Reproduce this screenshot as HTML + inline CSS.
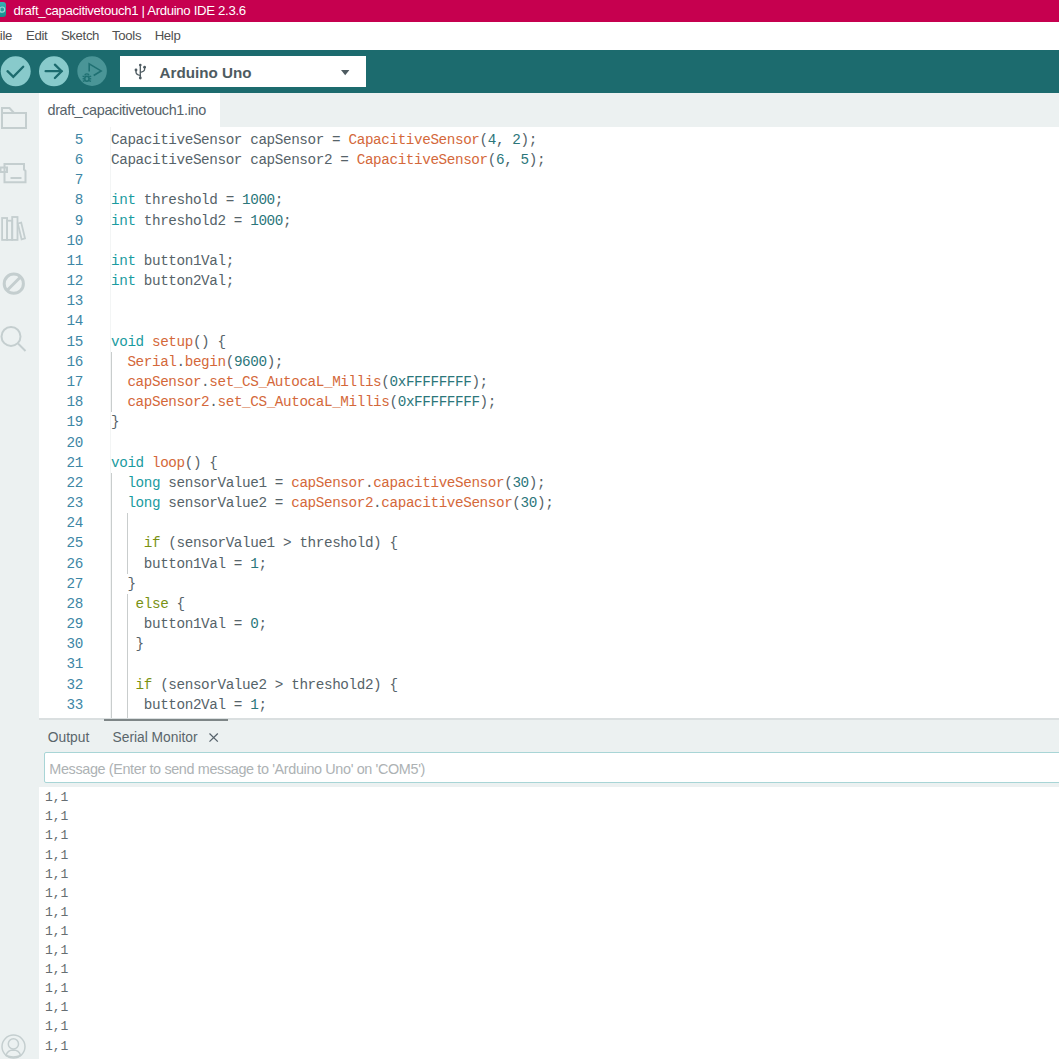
<!DOCTYPE html>
<html><head><meta charset="utf-8">
<style>
*{box-sizing:border-box;margin:0;padding:0}
html,body{width:1059px;height:1059px;overflow:hidden;background:#fff;font-family:"Liberation Sans",sans-serif}
.abs{position:absolute}
#title{left:0;top:0;width:1059px;height:22px;background:#c6004f}
#title .txt{left:13.5px;top:2.5px;color:#fff;font-size:13.2px;letter-spacing:-0.33px;line-height:16px;white-space:pre}
#appicon{left:-9px;top:2.3px;width:15px;height:15.2px;border-radius:3px;background:linear-gradient(#3ab3b5,#16898b)}
#menu{left:0;top:22px;width:1059px;height:28px;background:#fff}
#menu span{position:absolute;top:6px;font-size:13.2px;letter-spacing:-0.35px;line-height:16px;color:#505050;white-space:pre}
#toolbar{left:0;top:50px;width:1059px;height:42.5px;background:#1c6b6e}
.circ{position:absolute;width:30px;height:30px;border-radius:50%;top:56.2px}
#board{left:119.5px;top:56px;width:246.5px;height:31px;background:#fff}
#board .name{left:40px;top:6.8px;font-size:15.2px;font-weight:700;color:#4e5b61;line-height:20px;white-space:pre}
#sidebar{left:0;top:92.5px;width:39px;height:967px;background:#ecf1f1}
#tabbar{left:39px;top:92.5px;width:1020px;height:34.5px;background:#ecf1f1}
#tab{left:39px;top:92.5px;width:181px;height:34.5px;background:#fff}
#tab .t{left:8.5px;top:9.3px;font-size:14.4px;letter-spacing:-0.34px;line-height:16px;color:#56636a;white-space:pre}
#editor{left:39px;top:127px;width:1020px;height:591px;background:#fff;overflow:hidden}
.ln,.cl{position:absolute;font-family:"Liberation Mono",monospace;font-size:14.3px;letter-spacing:-0.39px;line-height:20.18px;height:20.18px;white-space:pre}
.ln{left:0;width:44px;text-align:right;color:#3d86a5}
.cl{left:72px;color:#566369}
.k{color:#1a9ba0}.f{color:#d4683a}.n{color:#2b767a}.c{color:#7a9214}
.guide{position:absolute;width:1px;background:#c9cdcd}
#faint{left:70.5px;top:0;width:1px;height:591px;background:#f3f5f5}
#sep{left:39px;top:718px;width:1020px;height:2px;background:#dadfe0}
#panel{left:39px;top:720px;width:1020px;height:339px;background:#ecf1f1}
#ptab{left:103.9px;top:719px;width:124px;height:2px;background:#7e8687}
.ptxt{position:absolute;top:728px;font-size:13.8px;line-height:20px;color:#5a666b;white-space:pre}
#input{left:43.8px;top:752px;width:1020px;height:31px;background:#fff;border:1px solid #a8d5d6;border-radius:2px}
#input .ph{left:4.5px;top:6.5px;font-size:14.4px;letter-spacing:-0.36px;line-height:18px;color:#adb2b4;white-space:pre}
#out{left:39px;top:786.5px;width:1020px;height:273px;background:#fff}
.o{position:absolute;left:6px;font-family:"Liberation Mono",monospace;font-size:13px;line-height:19.1px;color:#666e72;white-space:pre}
svg{position:absolute;overflow:visible}
</style></head><body>
<div id="title" class="abs"><div id="appicon" class="abs"></div><svg style="left:-9px;top:2.3px" width="15" height="15"><g fill="none" stroke="#9ad6d6" stroke-width="1.2"><circle cx="6.3" cy="7.6" r="2.6"/><circle cx="11.1" cy="7.6" r="2.6"/></g></svg><div class="txt abs">draft_capacitivetouch1 | Arduino IDE 2.3.6</div></div>
<div id="menu" class="abs">
<span style="left:-0.2px">ile</span><span style="left:26px">Edit</span><span style="left:60.9px">Sketch</span><span style="left:112.1px">Tools</span><span style="left:154.7px">Help</span>
</div>
<div id="toolbar" class="abs">
</div>
<svg style="left:0;top:0" width="120" height="92">
<circle cx="15.7" cy="71.3" r="15" fill="#88cacb"/>
<circle cx="54" cy="71.3" r="15" fill="#88cacb"/>
<circle cx="92.1" cy="71.1" r="14.8" fill="#4a9597"/>
<polyline points="7.5,71.2 13.3,76.8 23.2,66.8" fill="none" stroke="#1c6b6e" stroke-width="2.3" stroke-linecap="round" stroke-linejoin="miter"/>
<line x1="45.6" y1="71.2" x2="61.5" y2="71.2" stroke="#1c6b6e" stroke-width="2.3" stroke-linecap="round"/>
<polyline points="54.9,64.7 61.6,71.2 54.9,78" fill="none" stroke="#1c6b6e" stroke-width="2.3" stroke-linecap="round"/>
<polyline points="89.2,71.6 89.2,63.9 101.1,70.9 93.7,75.5" fill="none" stroke="#1f7072" stroke-width="1.6" stroke-linejoin="miter"/>
<g fill="none" stroke="#1f7072" stroke-width="1.4">
<path d="M85,75.6 Q85,73.9 86.9,73.9 Q88.8,73.9 88.8,75.6"/>
<ellipse cx="86.9" cy="78.8" rx="2.1" ry="2.5"/>
<line x1="82.6" y1="76.2" x2="84.6" y2="76.8"/><line x1="82.6" y1="78.8" x2="84.6" y2="78.8"/><line x1="82.8" y1="81.4" x2="84.8" y2="80.6"/>
<line x1="91.2" y1="76.2" x2="89.2" y2="76.8"/><line x1="91.2" y1="78.8" x2="89.2" y2="78.8"/><line x1="91" y1="81.4" x2="89" y2="80.6"/>
</g>
</svg>
<div id="board" class="abs">
<svg style="left:0;top:0" width="40" height="31">
<g fill="none" stroke="#4e5b61" stroke-width="1.3" stroke-linecap="round">
<line x1="20.3" y1="9" x2="20.3" y2="22"/>
<path d="M16,14 V16.2 Q16,18.6 20.3,19.4"/>
<path d="M24.6,11.2 V13.2 Q24.6,15.4 20.5,16.3"/>
</g>
<g fill="#4e5b61"><circle cx="20.3" cy="9" r="1.3"/><circle cx="16" cy="14" r="1.4"/><circle cx="24.6" cy="11.2" r="1.4"/><circle cx="20.3" cy="22" r="1.4"/></g>
</svg>
<div class="name abs">Arduino Uno</div>
<svg style="left:221.3px;top:13.5px" width="9" height="6"><path d="M0,0 H8.4 L4.2,5.2Z" fill="#4e5b61"/></svg>
</div>
<div id="sidebar" class="abs"></div>
<svg style="left:0;top:0" width="40" height="1059">
<g fill="none" stroke="#c4cecf" stroke-width="2">
<path d="M2,108 H9.5 L14,113 H26 V128 H2 Z"/>
<line x1="2" y1="113" x2="14" y2="113"/>
<path d="M4.5,164 H24 V169.5 L25.5,171 V182.2 H4.5 Z"/>
<rect x="0.5" y="167.5" width="6.5" height="4.5"/>
<line x1="10.5" y1="178" x2="21.5" y2="178" />
<g stroke-width="1.8"><rect x="2.1" y="218" width="5" height="21.9"/>
<rect x="7.1" y="220.7" width="5.1" height="19.2"/>
<rect x="12.2" y="217" width="5.3" height="22.9"/>
<path d="M17.8,223.5 L21.2,222.6 L25,238.3 L21.6,239.3 Z"/></g>
</g>
<g fill="none" stroke="#c4cecf" stroke-width="3">
<circle cx="13.8" cy="283.7" r="9.6"/>
<line x1="7.5" y1="290" x2="20" y2="277.5"/>
</g>
<g fill="none" stroke="#c4cecf" stroke-width="2">
<circle cx="11" cy="336.4" r="9.5"/>
<line x1="18" y1="343.5" x2="25.5" y2="351" />
</g><g fill="none" stroke="#c4cecf" stroke-width="1.5">
<circle cx="13.5" cy="1046.6" r="11.5"/>
<circle cx="13.4" cy="1043.9" r="5.1"/>
<path d="M6,1055.5 Q7.5,1050 13.3,1049.9 Q19.1,1050 20.6,1055.5 Q13.3,1058.5 6,1055.5 Z"/>
</g>
</svg>
<div id="tabbar" class="abs"></div>
<div id="tab" class="abs"><div class="t abs">draft_capacitivetouch1.ino</div></div>
<div id="editor" class="abs">
<div id="faint" class="abs"></div>
<div class="ln" style="top:2.80px">5</div>
<div class="cl" style="top:2.80px">CapacitiveSensor capSensor = <span class="f">CapacitiveSensor</span>(<span class="n">4</span>, <span class="n">2</span>);</div>
<div class="ln" style="top:22.98px">6</div>
<div class="cl" style="top:22.98px">CapacitiveSensor capSensor2 = <span class="f">CapacitiveSensor</span>(<span class="n">6</span>, <span class="n">5</span>);</div>
<div class="ln" style="top:43.16px">7</div>
<div class="ln" style="top:63.34px">8</div>
<div class="cl" style="top:63.34px"><span class="k">int</span> threshold = <span class="n">1000</span>;</div>
<div class="ln" style="top:83.52px">9</div>
<div class="cl" style="top:83.52px"><span class="k">int</span> threshold2 = <span class="n">1000</span>;</div>
<div class="ln" style="top:103.70px">10</div>
<div class="ln" style="top:123.88px">11</div>
<div class="cl" style="top:123.88px"><span class="k">int</span> button1Val;</div>
<div class="ln" style="top:144.06px">12</div>
<div class="cl" style="top:144.06px"><span class="k">int</span> button2Val;</div>
<div class="ln" style="top:164.24px">13</div>
<div class="ln" style="top:184.42px">14</div>
<div class="ln" style="top:204.60px">15</div>
<div class="cl" style="top:204.60px"><span class="k">void</span> <span class="f">setup</span>() {</div>
<div class="ln" style="top:224.78px">16</div>
<div class="cl" style="top:224.78px">  <span class="f">Serial</span>.<span class="f">begin</span>(<span class="n">9600</span>);</div>
<div class="ln" style="top:244.96px">17</div>
<div class="cl" style="top:244.96px">  <span class="f">capSensor</span>.<span class="f">set_CS_AutocaL_Millis</span>(<span class="n">0xFFFFFFFF</span>);</div>
<div class="ln" style="top:265.14px">18</div>
<div class="cl" style="top:265.14px">  <span class="f">capSensor2</span>.<span class="f">set_CS_AutocaL_Millis</span>(<span class="n">0xFFFFFFFF</span>);</div>
<div class="ln" style="top:285.32px">19</div>
<div class="cl" style="top:285.32px">}</div>
<div class="ln" style="top:305.50px">20</div>
<div class="ln" style="top:325.68px">21</div>
<div class="cl" style="top:325.68px"><span class="k">void</span> <span class="f">loop</span>() {</div>
<div class="ln" style="top:345.86px">22</div>
<div class="cl" style="top:345.86px">  <span class="k">long</span> sensorValue1 = <span class="f">capSensor</span>.<span class="f">capacitiveSensor</span>(<span class="n">30</span>);</div>
<div class="ln" style="top:366.04px">23</div>
<div class="cl" style="top:366.04px">  <span class="k">long</span> sensorValue2 = <span class="f">capSensor2</span>.<span class="f">capacitiveSensor</span>(<span class="n">30</span>);</div>
<div class="ln" style="top:386.22px">24</div>
<div class="ln" style="top:406.40px">25</div>
<div class="cl" style="top:406.40px">    <span class="c">if</span> (sensorValue1 &gt; threshold) {</div>
<div class="ln" style="top:426.58px">26</div>
<div class="cl" style="top:426.58px">    button1Val = <span class="n">1</span>;</div>
<div class="ln" style="top:446.76px">27</div>
<div class="cl" style="top:446.76px">  }</div>
<div class="ln" style="top:466.94px">28</div>
<div class="cl" style="top:466.94px">   <span class="c">else</span> {</div>
<div class="ln" style="top:487.12px">29</div>
<div class="cl" style="top:487.12px">    button1Val = <span class="n">0</span>;</div>
<div class="ln" style="top:507.30px">30</div>
<div class="cl" style="top:507.30px">   }</div>
<div class="ln" style="top:527.48px">31</div>
<div class="ln" style="top:547.66px">32</div>
<div class="cl" style="top:547.66px">   <span class="c">if</span> (sensorValue2 &gt; threshold2) {</div>
<div class="ln" style="top:567.84px">33</div>
<div class="cl" style="top:567.84px">    button2Val = <span class="n">1</span>;</div>
<div class="ln" style="top:588.02px">34</div>
<div class="cl" style="top:588.02px">  }</div>
<div class="guide" style="left:72.00px;top:224.78px;height:60.54px"></div>
<div class="guide" style="left:72.00px;top:345.86px;height:262.34px"></div>
<div class="guide" style="left:88.26px;top:386.22px;height:60.54px"></div>
<div class="guide" style="left:88.26px;top:466.94px;height:141.26px"></div>
</div>
<div id="sep" class="abs"></div>
<div id="panel" class="abs"></div>
<div id="ptab" class="abs"></div>
<div class="ptxt" style="left:47.8px">Output</div>
<div class="ptxt" style="left:112.5px">Serial Monitor</div>
<svg style="left:208.5px;top:733px" width="10" height="10"><g stroke="#55616a" stroke-width="1.25"><line x1="0.5" y1="0.5" x2="8.8" y2="8.6"/><line x1="8.8" y1="0.5" x2="0.5" y2="8.6"/></g></svg>
<div id="input" class="abs"><div class="ph abs">Message (Enter to send message to 'Arduino Uno' on 'COM5')</div></div>
<div id="out" class="abs">
<div class="o" style="top:1.70px">1,1</div>
<div class="o" style="top:20.80px">1,1</div>
<div class="o" style="top:39.90px">1,1</div>
<div class="o" style="top:59.00px">1,1</div>
<div class="o" style="top:78.10px">1,1</div>
<div class="o" style="top:97.20px">1,1</div>
<div class="o" style="top:116.30px">1,1</div>
<div class="o" style="top:135.40px">1,1</div>
<div class="o" style="top:154.50px">1,1</div>
<div class="o" style="top:173.60px">1,1</div>
<div class="o" style="top:192.70px">1,1</div>
<div class="o" style="top:211.80px">1,1</div>
<div class="o" style="top:230.90px">1,1</div>
<div class="o" style="top:250.00px">1,1</div>
<div class="o" style="top:269.10px">1,1</div>
</div>
</body></html>
